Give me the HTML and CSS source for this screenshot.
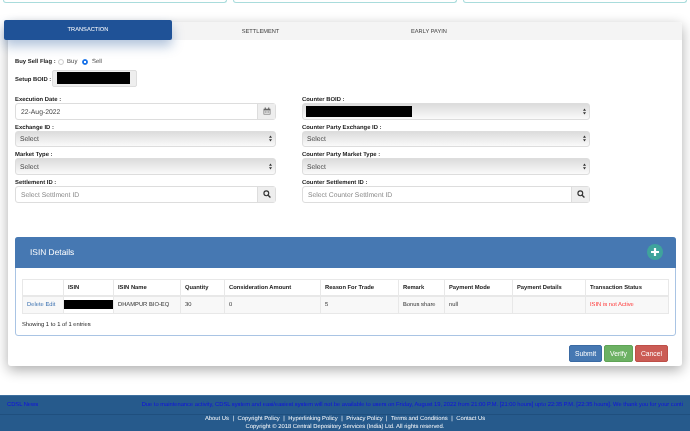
FILE: index.html
```html
<!DOCTYPE html>
<html lang="en">
<head>
<meta charset="utf-8">
<title>Transaction</title>
<link rel="stylesheet" href="styles.css">
</head>
<body>
<div class="top-cards"><div class="top-card"></div><div class="top-card"></div><div class="top-card"></div></div>
<main class="card">
  <nav class="tabs">
    <div class="tab active">TRANSACTION</div>
    <div class="tab second">SETTLEMENT</div>
    <div class="tab third">EARLY PAYIN</div>
  </nav>
  <section class="form">
    <div class="flag-row">
      <span class="lbl">Buy Sell Flag :</span>
      <span class="radio"></span><span class="opt">Buy</span>
      <span class="radio on"></span><span class="opt">Sell</span>
    </div>
    <div class="boid-row">
      <span class="lbl">Setup BOID :</span>
      <span class="boid-box"><span class="redact boid-redact"></span></span>
    </div>
    <div class="grid">
      <div class="col">
        <label class="lbl">Execution Date :</label>
        <div class="group"><span class="input">22-Aug-2022</span><span class="addon">
          <svg viewBox="0 0 14 14" width="8" height="8"><path fill="#666" d="M1 3h12v10H1zM3 1h2v2H3zM9 1h2v2H9z"/><path fill="#eee" d="M2 6h10v6H2z"/><path fill="#666" d="M3 7h2v1H3zM6 7h2v1H6zM9 7h2v1H9zM3 9.500h2v1H3zM6 9.500h2v1H6zM9 9.500h2v1H9z"/></svg>
        </span></div>
        <label class="lbl">Exchange ID :</label>
        <div class="select"><span class="sel-text">Select</span><svg class="arrows" viewBox="0 0 4 8" width="3" height="7"><path fill="#333" d="M2 0l2 3H0zM2 8L0 5h4z"/></svg></div>
        <label class="lbl">Market Type :</label>
        <div class="select"><span class="sel-text">Select</span><svg class="arrows" viewBox="0 0 4 8" width="3" height="7"><path fill="#333" d="M2 0l2 3H0zM2 8L0 5h4z"/></svg></div>
        <label class="lbl">Settlement ID :</label>
        <div class="group"><span class="input ph">Select Settlment ID</span><span class="addon">
          <svg viewBox="0 0 14 14" width="8" height="8"><circle cx="5.800" cy="5.800" r="4.200" fill="none" stroke="#333" stroke-width="2"/><path d="M9 9l4 4" stroke="#333" stroke-width="2.400"/></svg>
        </span></div>
      </div>
      <div class="col right">
        <label class="lbl">Counter BOID :</label>
        <div class="select boid-select"><span class="redact counter-redact"></span><svg class="arrows" viewBox="0 0 4 8" width="3" height="7"><path fill="#333" d="M2 0l2 3H0zM2 8L0 5h4z"/></svg></div>
        <label class="lbl">Counter Party Exchange ID :</label>
        <div class="select"><span class="sel-text">Select</span><svg class="arrows" viewBox="0 0 4 8" width="3" height="7"><path fill="#333" d="M2 0l2 3H0zM2 8L0 5h4z"/></svg></div>
        <label class="lbl">Counter Party Market Type :</label>
        <div class="select"><span class="sel-text">Select</span><svg class="arrows" viewBox="0 0 4 8" width="3" height="7"><path fill="#333" d="M2 0l2 3H0zM2 8L0 5h4z"/></svg></div>
        <label class="lbl">Counter Settlement ID :</label>
        <div class="group"><span class="input ph">Select Counter Settlment ID</span><span class="addon">
          <svg viewBox="0 0 14 14" width="8" height="8"><circle cx="5.800" cy="5.800" r="4.200" fill="none" stroke="#333" stroke-width="2"/><path d="M9 9l4 4" stroke="#333" stroke-width="2.400"/></svg>
        </span></div>
      </div>
    </div>
    <div class="panel">
      <div class="panel-head">
        <span class="panel-title">ISIN Details</span>
        <span class="plus"><svg viewBox="0 0 10 10" width="10" height="10"><path d="M5 1v8M1 5h8" stroke="#fff" stroke-width="2.200"/></svg></span>
      </div>
      <div class="panel-body">
        <table>
          <thead>
            <tr>
              <th class="c1"></th><th class="c2">ISIN</th><th class="c3">ISIN Name</th><th class="c4">Quantity</th><th class="c5">Consideration Amount</th><th class="c6">Reason For Trade</th><th class="c7">Remark</th><th class="c8">Payment Mode</th><th class="c9">Payment Details</th><th class="c10">Transaction Status</th>
            </tr>
          </thead>
          <tbody>
            <tr>
              <td><a class="link">Delete</a> <a class="link">Edit</a></td><td class="isin"><span class="redact isin-redact"></span></td><td>DHAMPUR BIO-EQ</td><td>30</td><td>0</td><td>5</td><td>Bonus share</td><td>null</td><td></td><td class="bad">ISIN is not Active</td>
            </tr>
          </tbody>
        </table>
        <div class="showing">Showing 1 to 1 of 1 entries</div>
      </div>
    </div>
    <div class="actions">
      <button class="btn submit">Submit</button><button class="btn verify">Verify</button><button class="btn cancel">Cancel</button>
    </div>
  </section>
</main>
<footer class="footer">
  <div class="news"><span class="news-label">CDSL News</span><span class="news-text">Due to maintenance activity, CDSL system and easi/easiest system will not be available to users on Friday, August 19, 2022 from 21:00 P.M. [21:00 hours] upto 22:35 P.M. [22:35 hours]. We thank you for your conti</span></div>
  <div class="links">
    <div class="link-row"><a>About Us</a><i>|</i><a>Copyright Policy</a><i>|</i><a>Hyperlinking Policy</a><i>|</i><a>Privacy Policy</a><i>|</i><a>Terms and Conditions</a><i>|</i><a>Contact Us</a></div>
    <div class="copy">Copyright © 2018 Central Depository Services (India) Ltd. All rights reserved.</div>
  </div>
</footer>
</body>
</html>
```
FILE: styles.css
```css
* { box-sizing: border-box; }
html, body { margin: 0; padding: 0; }
body { width: 690px; height: 431px; overflow: hidden; background: #fff; font-family: "Liberation Sans", Arial, sans-serif; color: #333; font-size: 6.400px; text-rendering: geometricPrecision; will-change: opacity; }

.top-cards { display: flex; gap: 6px; padding: 0 3px; height: 3px; }
.top-card { flex: 1; border: 1px solid #a9dcdc; border-top: 0; border-radius: 0 0 4px 4px; }

.card { margin: 19px 8px 0; height: 344px; background: #fff; border-radius: 3px; box-shadow: 0 4px 13px rgba(0,0,0,.33); }

.tabs { display: flex; height: 18px; background: #f4f4f4; font-size: 5.700px; color: #444; border-radius: 3px 3px 0 0; }
.tab { text-align: center; line-height: 20px; }
.tab.active { width: 168px; height: 20px; margin: -2px 0 0 -4px; background: #1f5297; color: #fff; border-radius: 2px; line-height: 20.500px; box-shadow: 0 6px 12px rgba(31,82,151,.35); }
.tab.second { width: 177px; }
.tab.third { width: 160px; }

.form { padding: 0 6px 0 7px; }
.lbl { font-weight: bold; color: #222; font-size: 5.900px; display: block; line-height: 10px; }

.flag-row { display: flex; align-items: center; margin-top: 18px; height: 8px; }
.flag-row .lbl { margin-right: 2px; }
.radio { width: 6px; height: 6px; border-radius: 50%; border: 1px solid #ccc; background: #fff; margin-right: 3.500px; }
.radio.on { border: 1.500px solid #1a73e8; background: radial-gradient(#fff 0 1px, #1a73e8 1.200px); margin-left: 5px; margin-right: 3.500px; }
.opt { color: #444; font-size: 6px; }

.boid-row { display: flex; align-items: center; margin-top: 4px; height: 17px; }
.boid-row .lbl { margin-right: 1px; padding-top: 2px; }
.boid-box { width: 85px; height: 17px; border: 1px solid #ddd; background: #eee; border-radius: 2px; padding: 1px 0 0 4px; }
.redact { display: block; background: #000; }
.boid-redact { width: 73px; height: 12px; }

.grid { display: flex; margin-top: 8px; }
.col { width: 261px; }
.col.right { width: 288px; margin-left: 26px; }
.col .lbl { margin-top: 3px; height: 8px; }
.col .lbl:first-child { margin-top: 0; }

.group { display: flex; height: 16.670px; border: 1px solid #ddd; border-radius: 3px; background: #fff; }
.input { flex: 1; padding: 2px 0 0 5px; line-height: 14.670px; font-size: 6.800px; color: #444; }
.input.ph { color: #888; }
.addon { width: 18px; background: #eee; border-left: 1px solid #ddd; display: flex; align-items: center; justify-content: center; }

.select { height: 16.670px; border: 1px solid #ddd; border-radius: 3px; background: linear-gradient(#dcdcdc, #fafafa); display: flex; align-items: center; justify-content: space-between; padding: 0 3px 0 4px; font-size: 6.800px; color: #444; }
.sel-text { padding-top: 2px; }
.boid-select { padding-left: 3px; }
.counter-redact { width: 106px; height: 11px; }

.panel { margin-top: 34px; height: 99px; border: 1px solid #a9c4e4; border-radius: 3px; }
.panel-head { display: flex; justify-content: space-between; align-items: center; height: 31px; background: #4678b2; margin: -1px -1px 0; border-radius: 3px 3px 0 0; padding: 0 13px 0 15px; }
.panel-title { color: #fff; font-size: 8.400px; }
.plus { width: 16px; height: 16px; border-radius: 50%; background: #3fa39c; display: flex; align-items: center; justify-content: center; }
.panel-body { padding: 11px 6px 0 6px; }
table { border-collapse: collapse; table-layout: fixed; width: 646px; font-size: 5.800px; }
th, td { border: 1px solid #e8e8e8; padding: 1px 4px 0; text-align: left; height: 17px; white-space: nowrap; overflow: hidden; }
th { font-weight: bold; color: #222; border-bottom-width: 2px; }
td { background: #f8f8f8; color: #333; }
td.isin { background: #fff; padding: 0; vertical-align: top; }
.isin-redact { height: 9px; margin-top: 3px; width: 100%; }
.c1 { width: 41px; } .c2 { width: 50px; } .c3 { width: 67px; } .c4 { width: 44px; } .c5 { width: 96px; } .c6 { width: 78px; } .c7 { width: 46px; } .c8 { width: 68px; } .c9 { width: 73px; } .c10 { width: 83px; }
.link { color: #3a70b0; }
.bad { color: #f33; }
.showing { margin-top: 8px; font-size: 5.800px; color: #222; }

.actions { display: flex; justify-content: flex-end; gap: 2px; margin-top: 9px; padding-right: 8px; }
.btn { height: 17px; border-radius: 2px; border: 1px solid; color: #fff; font: 6.800px "Liberation Sans", Arial, sans-serif; padding: 0; }
.submit { width: 33px; background: #4678b2; border-color: #3a6aa3; }
.verify { width: 29px; background: #6cb163; border-color: #5fa356; }
.cancel { width: 33px; background: #cb5c55; border-color: #bd4f48; }

.footer { margin-top: 29px; height: 36px; background: #265a8c; border-top: 1px solid #3d6f9e; }
.news { display: flex; justify-content: space-between; align-items: center; height: 19px; padding: 0 7px; border-bottom: 1px solid #1f4f7e; font-size: 5.750px; color: #1010e0; white-space: nowrap; overflow: hidden; }
.news-label { flex: none; }
.links { text-align: center; color: #fff; font-size: 5.850px; }
.link-row { line-height: 8px; }
.link-row i { font-style: normal; margin: 0 3.500px; }
.copy { line-height: 8px; }
```
